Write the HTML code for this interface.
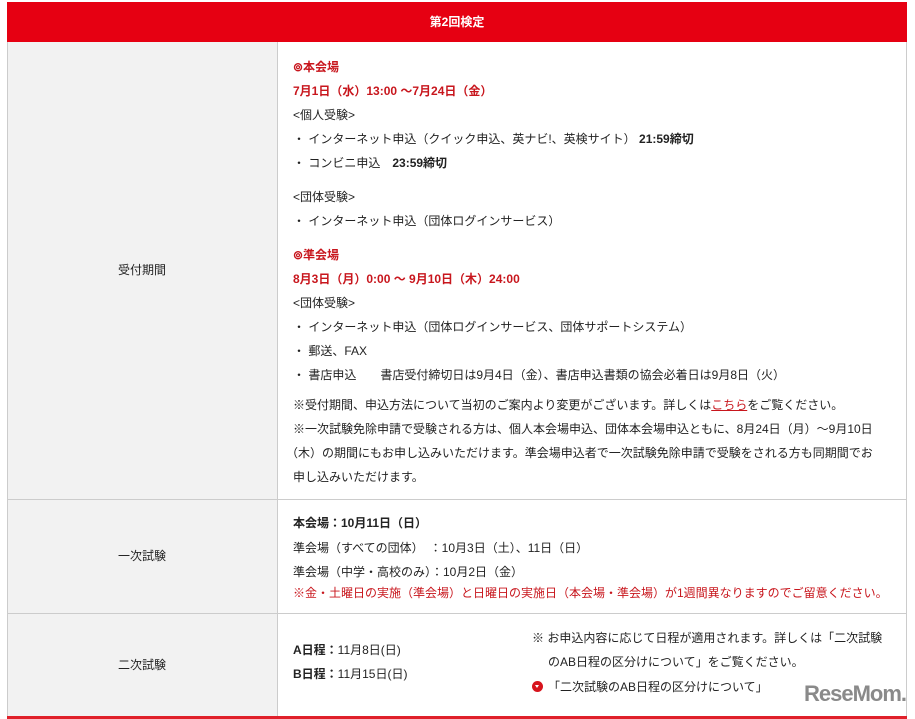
<!DOCTYPE html>
<html><head><meta charset="utf-8"><style>
*{margin:0;padding:0;box-sizing:border-box}
body{width:915px;height:719px;background:#fff;position:relative;overflow:hidden;font-family:"Liberation Sans","Noto Sans CJK JP",sans-serif;font-size:12px;color:#222}
.a{position:absolute;white-space:nowrap;line-height:16px}
.r{color:#c8161d}
.b{font-weight:bold}
.hd{position:absolute;left:7px;top:2px;width:900px;height:40px;background:#e60012;color:#fff;font-weight:bold;text-align:center;line-height:40px;font-size:12px}
.g{position:absolute;left:7px;width:271px;background:#f2f2f2;border-left:1px solid #ccc;border-right:1px solid #ccc}
.hl{position:absolute;left:7px;width:900px;height:1px;background:#ccc}
.vr{position:absolute;left:906px;width:1px;background:#ccc}
</style></head><body>
<div class="hd">第2回検定</div>
<div class="g" style="top:42px;height:676px"></div>
<div class="vr" style="top:42px;height:676px"></div>
<div class="hl" style="top:499px"></div>
<div class="hl" style="top:613px"></div>
<div style="position:absolute;left:7px;top:716px;width:900px;height:3px;background:#e0202a"></div>

<div class="a" style="left:118px;top:262px">受付期間</div>
<div class="a" style="left:118px;top:548px">一次試験</div>
<div class="a" style="left:118px;top:657px">二次試験</div>

<div class="a r b" style="left:293px;top:59px">⊚本会場</div>
<div class="a r b" style="left:293px;top:83px">7月1日（水）13:00 ～7月24日（金）</div>
<div class="a" style="left:293px;top:107px">&lt;個人受験&gt;</div>
<div class="a" style="left:293px;top:131px">・ インターネット申込（クイック申込、英ナビ!、英検サイト） <b>21:59締切</b></div>
<div class="a" style="left:293px;top:155px">・ コンビニ申込　<b>23:59締切</b></div>
<div class="a" style="left:293px;top:189px">&lt;団体受験&gt;</div>
<div class="a" style="left:293px;top:213px">・ インターネット申込（団体ログインサービス）</div>
<div class="a r b" style="left:293px;top:247px">⊚準会場</div>
<div class="a r b" style="left:293px;top:271px">8月3日（月）0:00 ～ 9月10日（木）24:00</div>
<div class="a" style="left:293px;top:295px">&lt;団体受験&gt;</div>
<div class="a" style="left:293px;top:319px">・ インターネット申込（団体ログインサービス、団体サポートシステム）</div>
<div class="a" style="left:293px;top:343px">・ 郵送、FAX</div>
<div class="a" style="left:293px;top:367px">・ 書店申込　　書店受付締切日は9月4日（金）、書店申込書類の協会必着日は9月8日（火）</div>
<div class="a" style="left:293px;top:397px">※受付期間、申込方法について当初のご案内より変更がございます。詳しくは<span class="r" style="text-decoration:underline">こちら</span>をご覧ください。</div>
<div class="a" style="left:293px;top:421px">※一次試験免除申請で受験される方は、個人本会場申込、団体本会場申込ともに、8月24日（月）～9月10日</div>
<div class="a" style="left:286px;top:445px">（木）の期間にもお申し込みいただけます。準会場申込者で一次試験免除申請で受験をされる方も同期間でお</div>
<div class="a" style="left:293px;top:469px">申し込みいただけます。</div>

<div class="a b" style="left:293px;top:515px">本会場：10月11日（日）</div>
<div class="a" style="left:293px;top:540px">準会場（すべての団体）　：10月3日（土）、11日（日）</div>
<div class="a" style="left:293px;top:564px">準会場（中学・高校のみ）：10月2日（金）</div>
<div class="a r" style="left:293px;top:585px">※金・土曜日の実施（準会場）と日曜日の実施日（本会場・準会場）が1週間異なりますのでご留意ください。</div>

<div class="a" style="left:293px;top:642px"><b>A日程：</b>11月8日(日)</div>
<div class="a" style="left:293px;top:666px"><b>B日程：</b>11月15日(日)</div>
<div class="a" style="left:532px;top:630px">※ お申込内容に応じて日程が適用されます。詳しくは「二次試験</div>
<div class="a" style="left:548px;top:654px">のAB日程の区分けについて」をご覧ください。</div>
<div style="position:absolute;left:532px;top:681px;width:11px;height:11px;border-radius:50%;background:#d7141d"></div>
<div style="position:absolute;left:535px;top:685px;width:0;height:0;border-left:2.5px solid transparent;border-right:2.5px solid transparent;border-top:3px solid #fff"></div>
<div class="a" style="left:548px;top:679px">「二次試験のAB日程の区分けについて」</div>
<div class="a b" style="left:804px;top:682px;font-size:22px;line-height:24px;color:#8a8a8a;letter-spacing:-1px">ReseMom.</div>
</body></html>
